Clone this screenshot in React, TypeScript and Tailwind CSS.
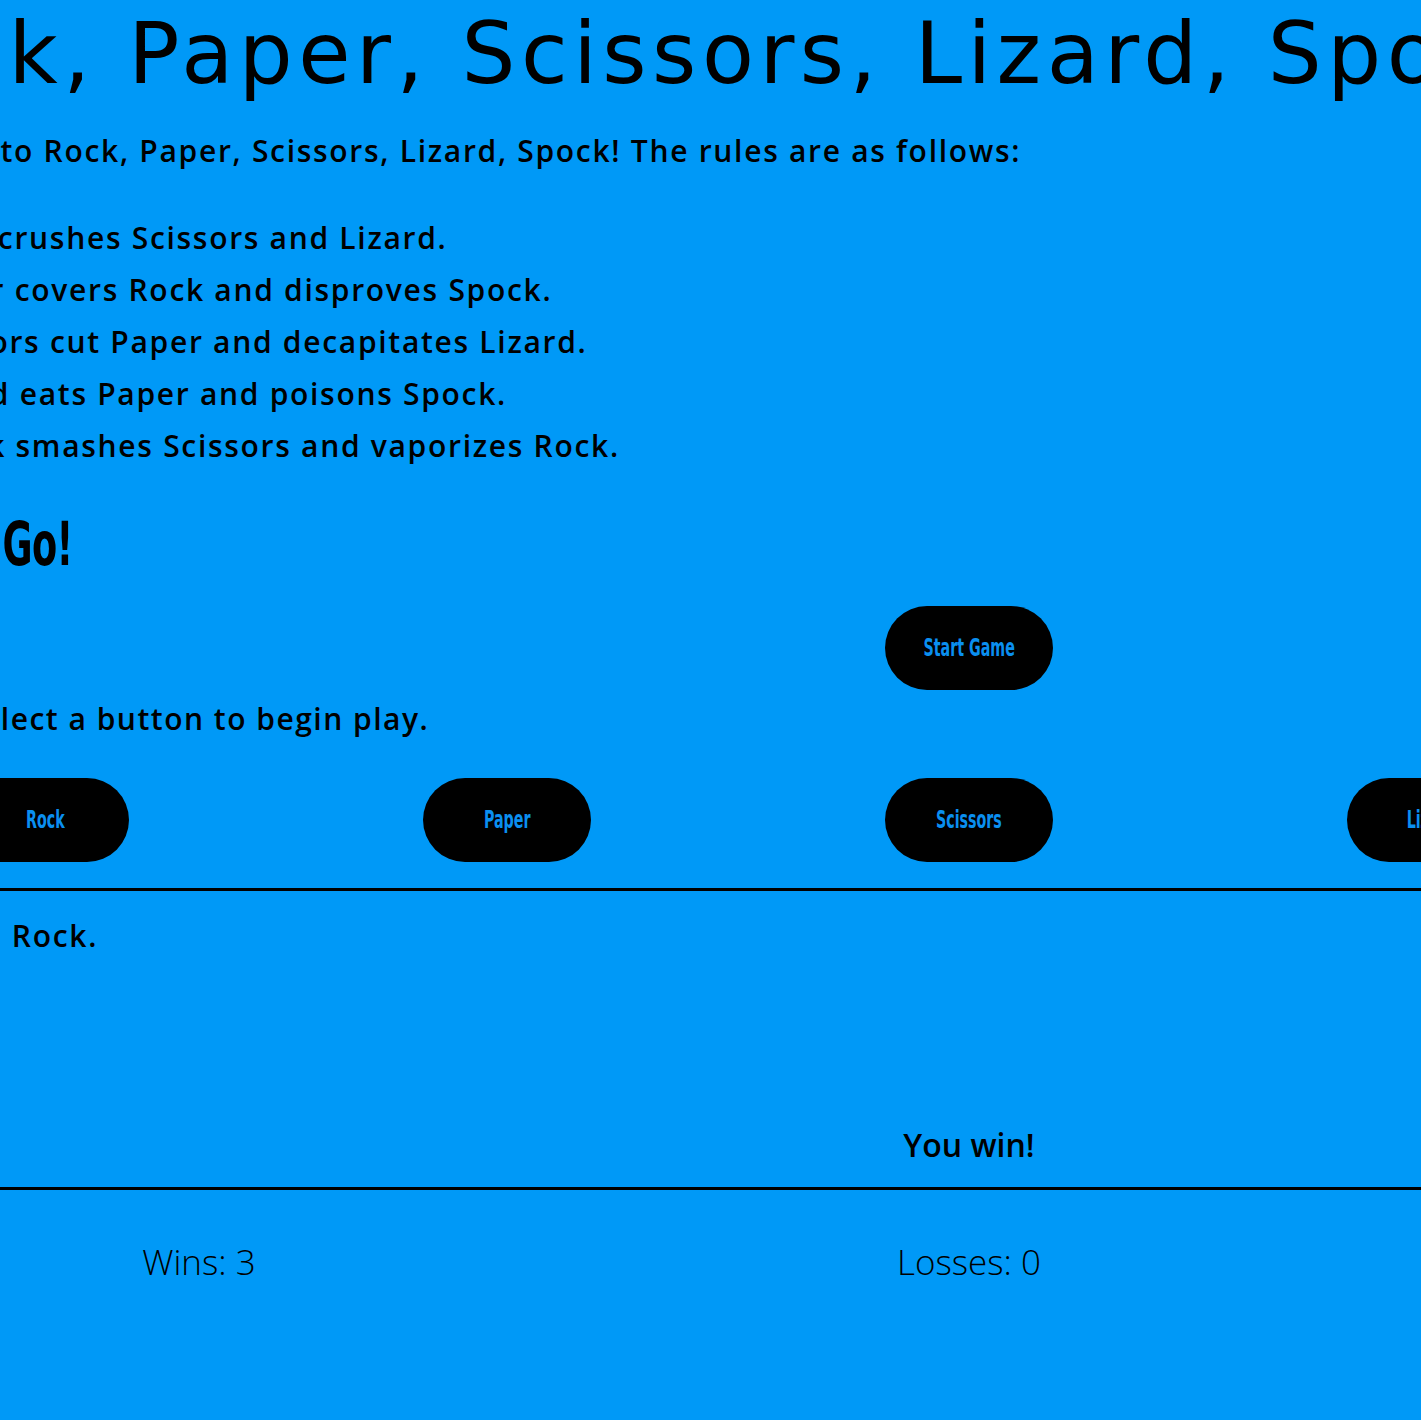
export default function App() {
  const picks = ["Rock", "Paper", "Scissors", "Lizard", "Spock"];
  const btn =
    "h-[84px] w-[168px] rounded-full bg-black font-['DejaVu_Sans',sans-serif] text-[24px] font-bold text-[#0a8ff0] font-stretch-condensed";
  return (
    <div className="min-h-screen w-full overflow-hidden bg-[#0099f7] text-black">
      <div className="w-[2310px] -ml-[186px]">
        <h1 className="pl-[24px] pt-[4px] whitespace-nowrap font-['DejaVu_Sans',sans-serif] text-[85px] font-normal leading-[100px] tracking-[5.5px]">
          Rock, Paper, Scissors, Lizard, Spock
        </h1>

        <div className="font-['Open_Sans',sans-serif] text-[30px] font-semibold tracking-[1.7px]">
          <p className="mt-[21px] pl-[32px] leading-[52px]">Welcome to Rock, Paper, Scissors, Lizard, Spock! The rules are as follows:</p>
          <ul className="mt-[35px] pl-[98px]">
            <li className="leading-[52px]">Rock crushes Scissors and Lizard.</li>
            <li className="leading-[52px]">Paper covers Rock and disproves Spock.</li>
            <li className="leading-[52px]">Scissors cut Paper and decapitates Lizard.</li>
            <li className="leading-[52px]">Lizard eats Paper and poisons Spock.</li>
            <li className="leading-[52px]">Spock smashes Scissors and vaporizes Rock.</li>
          </ul>
        </div>
        <h2 className="mt-[37px] pl-[81px] whitespace-nowrap font-['DejaVu_Sans',sans-serif] text-[60px] font-bold leading-[70px] font-stretch-condensed tracking-[-1px]">
          <span className="inline-block origin-left scale-x-[0.68]">Let's Go!</span>
        </h2>

        <div className="mt-[27px] flex justify-center">
          <button className={btn}>
            <span className="inline-block scale-x-[0.66]">Start Game</span>
          </button>
        </div>

        <p className="mt-[14px] pl-[150px] font-['Open_Sans',sans-serif] text-[30px] font-semibold leading-[30px] tracking-[1.5px]">
          Select a button to begin play.
        </p>

        <div className="mt-[44px] grid grid-cols-5">
          {picks.map((p) => (
            <div key={p} className="flex justify-center">
              <button className={btn}>
                <span className="inline-block scale-x-[0.66]">{p}</span>
              </button>
            </div>
          ))}
        </div>

        <hr className="mt-[26px] border-t-[3px] border-black" />

        <p className="mt-[27px] pl-[26px] font-['Open_Sans',sans-serif] text-[30px] font-semibold leading-[36px] tracking-[1.7px]">
          You chose Rock.
        </p>

        <p className="mt-[171px] text-center font-['Open_Sans',sans-serif] text-[32px] font-semibold leading-[40px]">
          You win!
        </p>

        <hr className="mt-[22px] border-t-[3px] border-black" />

        <div className="mt-[52px] grid grid-cols-3 text-center font-['Open_Sans',sans-serif] text-[35px] font-light leading-[40px]">
          <p>Wins: 3</p>
          <p>Losses: 0</p>
          <p>Ties: 0</p>
        </div>
      </div>
    </div>
  );
}
